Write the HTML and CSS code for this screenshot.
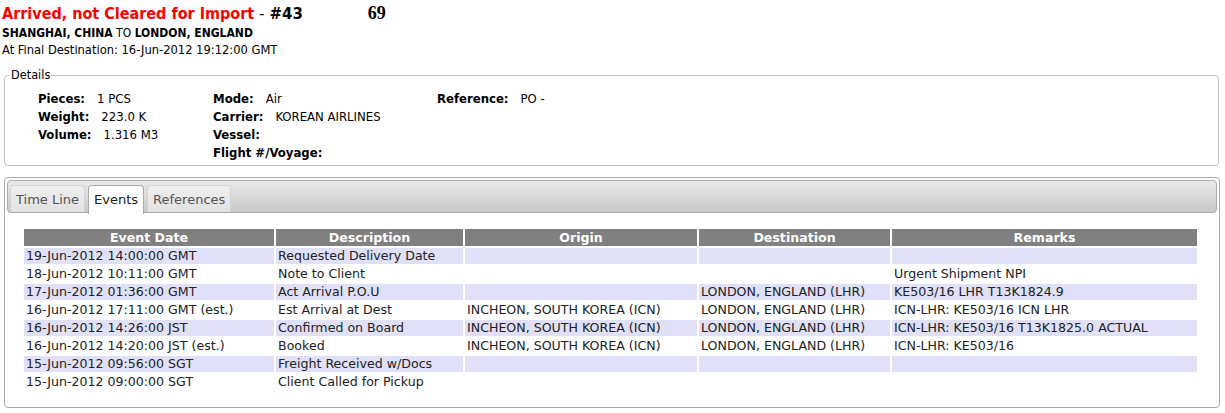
FILE: index.html
```html
<!DOCTYPE html>
<html>
<head>
<meta charset="utf-8">
<link rel="stylesheet" href="styles.css">
</head>
<body>
<div class="title"><span class="status">Arrived, not Cleared for Import</span> <span class="dash">-</span> <span class="ref">#43</span><span class="redact"></span><span class="num">69</span></div>
<div class="route"><b>SHANGHAI, CHINA</b> TO <b>LONDON, ENGLAND</b></div>
<div class="final">At Final Destination: 16-Jun-2012 19:12:00 GMT</div>

<fieldset class="details">
  <legend>Details</legend>
  <div class="dcols">
    <div class="dcol c1">
      <div class="drow"><span class="lbl">Pieces:</span><span class="val">1 PCS</span></div>
      <div class="drow"><span class="lbl">Weight:</span><span class="val">223.0 K</span></div>
      <div class="drow"><span class="lbl">Volume:</span><span class="val">1.316 M3</span></div>
    </div>
    <div class="dcol c2">
      <div class="drow"><span class="lbl">Mode:</span><span class="val">Air</span></div>
      <div class="drow"><span class="lbl">Carrier:</span><span class="val">KOREAN AIRLINES</span></div>
      <div class="drow"><span class="lbl">Vessel:</span></div>
      <div class="drow"><span class="lbl">Flight #/Voyage:</span></div>
    </div>
    <div class="dcol c3">
      <div class="drow"><span class="lbl">Reference:</span><span class="val">PO -</span></div>
    </div>
  </div>
</fieldset>

<div class="tabs">
  <ul class="tabnav">
    <li class="tab">Time Line</li>
    <li class="tab active">Events</li>
    <li class="tab">References</li>
  </ul>
  <div class="panel">
    <table class="events">
      <colgroup>
        <col class="w-date"><col class="w-desc"><col class="w-orig"><col class="w-dest"><col class="w-rem">
      </colgroup>
      <thead>
        <tr><th>Event Date</th><th>Description</th><th>Origin</th><th>Destination</th><th>Remarks</th></tr>
      </thead>
      <tbody>
        <tr class="alt"><td>19-Jun-2012 14:00:00 GMT</td><td>Requested Delivery Date</td><td></td><td></td><td></td></tr>
        <tr><td>18-Jun-2012 10:11:00 GMT</td><td>Note to Client</td><td></td><td></td><td>Urgent Shipment NPI</td></tr>
        <tr class="alt"><td>17-Jun-2012 01:36:00 GMT</td><td>Act Arrival P.O.U</td><td></td><td>LONDON, ENGLAND (LHR)</td><td>KE503/16 LHR T13K1824.9</td></tr>
        <tr><td>16-Jun-2012 17:11:00 GMT (est.)</td><td>Est Arrival at Dest</td><td>INCHEON, SOUTH KOREA (ICN)</td><td>LONDON, ENGLAND (LHR)</td><td>ICN-LHR: KE503/16 ICN LHR</td></tr>
        <tr class="alt"><td>16-Jun-2012 14:26:00 JST</td><td>Confirmed on Board</td><td>INCHEON, SOUTH KOREA (ICN)</td><td>LONDON, ENGLAND (LHR)</td><td>ICN-LHR: KE503/16 T13K1825.0 ACTUAL</td></tr>
        <tr><td>16-Jun-2012 14:20:00 JST (est.)</td><td>Booked</td><td>INCHEON, SOUTH KOREA (ICN)</td><td>LONDON, ENGLAND (LHR)</td><td>ICN-LHR: KE503/16</td></tr>
        <tr class="alt"><td>15-Jun-2012 09:56:00 SGT</td><td>Freight Received w/Docs</td><td></td><td></td><td></td></tr>
        <tr><td>15-Jun-2012 09:00:00 SGT</td><td>Client Called for Pickup</td><td></td><td></td><td></td></tr>
      </tbody>
    </table>
  </div>
</div>
</body>
</html>
```
FILE: styles.css
```css
html, body {
  margin: 0;
  padding: 0;
  background: #fff;
}
body {
  padding: 0 2px;
  font-family: "DejaVu Sans Condensed", "DejaVu Sans", sans-serif;
  color: #000;
}
.title {
  font-size: 16px;
  font-weight: bold;
  line-height: 26px;
  height: 25px;
  white-space: nowrap;
}
.status { color: #f00; }
.dash { font-weight: normal; }
.ref { font-family: "DejaVu Sans", sans-serif; font-size: 15px; }
.redact {
  display: inline-block;
  width: 65px;
  height: 1px;
}
.num {
  font-family: "Liberation Serif", serif;
  font-size: 18px;
}
.route {
  font-size: 12px;
  line-height: 15px;
  padding-top: 1px;
}
.final {
  font-size: 12.8px;
  line-height: 17px;
}
.details {
  margin: 10px 4px 0 2px;
  padding: 0 0 3px 0;
  border: 1px solid #c3c3c3;
  border-radius: 4px;
  font-size: 13px;
}
.details legend {
  padding: 0 1px;
  margin-left: 5px;
  font-size: 12.6px;
  line-height: 14px;
}
.dcols {
  display: flex;
  padding: 8px 0 0 33px;
}
.dcol.c1 { width: 175px; }
.dcol.c2 { width: 224px; }
.drow {
  height: 18px;
  line-height: 18px;
  white-space: nowrap;
}
.lbl {
  font-weight: bold;
  margin-right: 12px;
}
.val { font-size: 13px; }

.tabs {
  margin: 11px 3px 0 2px;
  border: 1px solid #aaa;
  border-radius: 4px;
  padding: 2px;
  height: 225px;
  font-family: "DejaVu Sans", sans-serif;
}
.tabnav {
  list-style: none;
  margin: 0;
  padding: 4px 0 0 2px;
  height: 33px;
  box-sizing: border-box;
  border: 1px solid #aaa;
  border-radius: 4px;
  background: linear-gradient(#e9e9e9, #c9c9c9);
  display: flex;
  gap: 3px;
}
.tab {
  height: 27px;
  box-sizing: border-box;
  padding: 0 5px;
  line-height: 27px;
  font-size: 13px;
  color: #555;
  border: 1px solid #d3d3d3;
  border-bottom: none;
  border-radius: 4px 4px 0 0;
  background: linear-gradient(#eeeeee, #e2e2e2);
}
.tab.active {
  height: 29px;
  background: #fff;
  color: #212121;
  border-color: #aaa;
}
.panel {
  padding: 14px 0 0 15px;
}
.events {
  border-collapse: separate;
  border-spacing: 2px;
  font-size: 12.6px;
  color: #222;
  table-layout: fixed;
  width: 1177px;
}
.w-date { width: 250px; }
.w-desc { width: 187px; }
.w-orig { width: 232px; }
.w-dest { width: 191px; }
.w-rem { width: 305px; }
.events th {
  background: #808080;
  color: #fff;
  font-weight: bold;
  height: 17px;
  line-height: 17px;
  padding: 0;
  text-align: center;
}
.events td {
  height: 16px;
  line-height: 16px;
  padding: 0 2px;
  white-space: nowrap;
  overflow: hidden;
}
.events tr.alt td { background: #e0e0f8; }
```
